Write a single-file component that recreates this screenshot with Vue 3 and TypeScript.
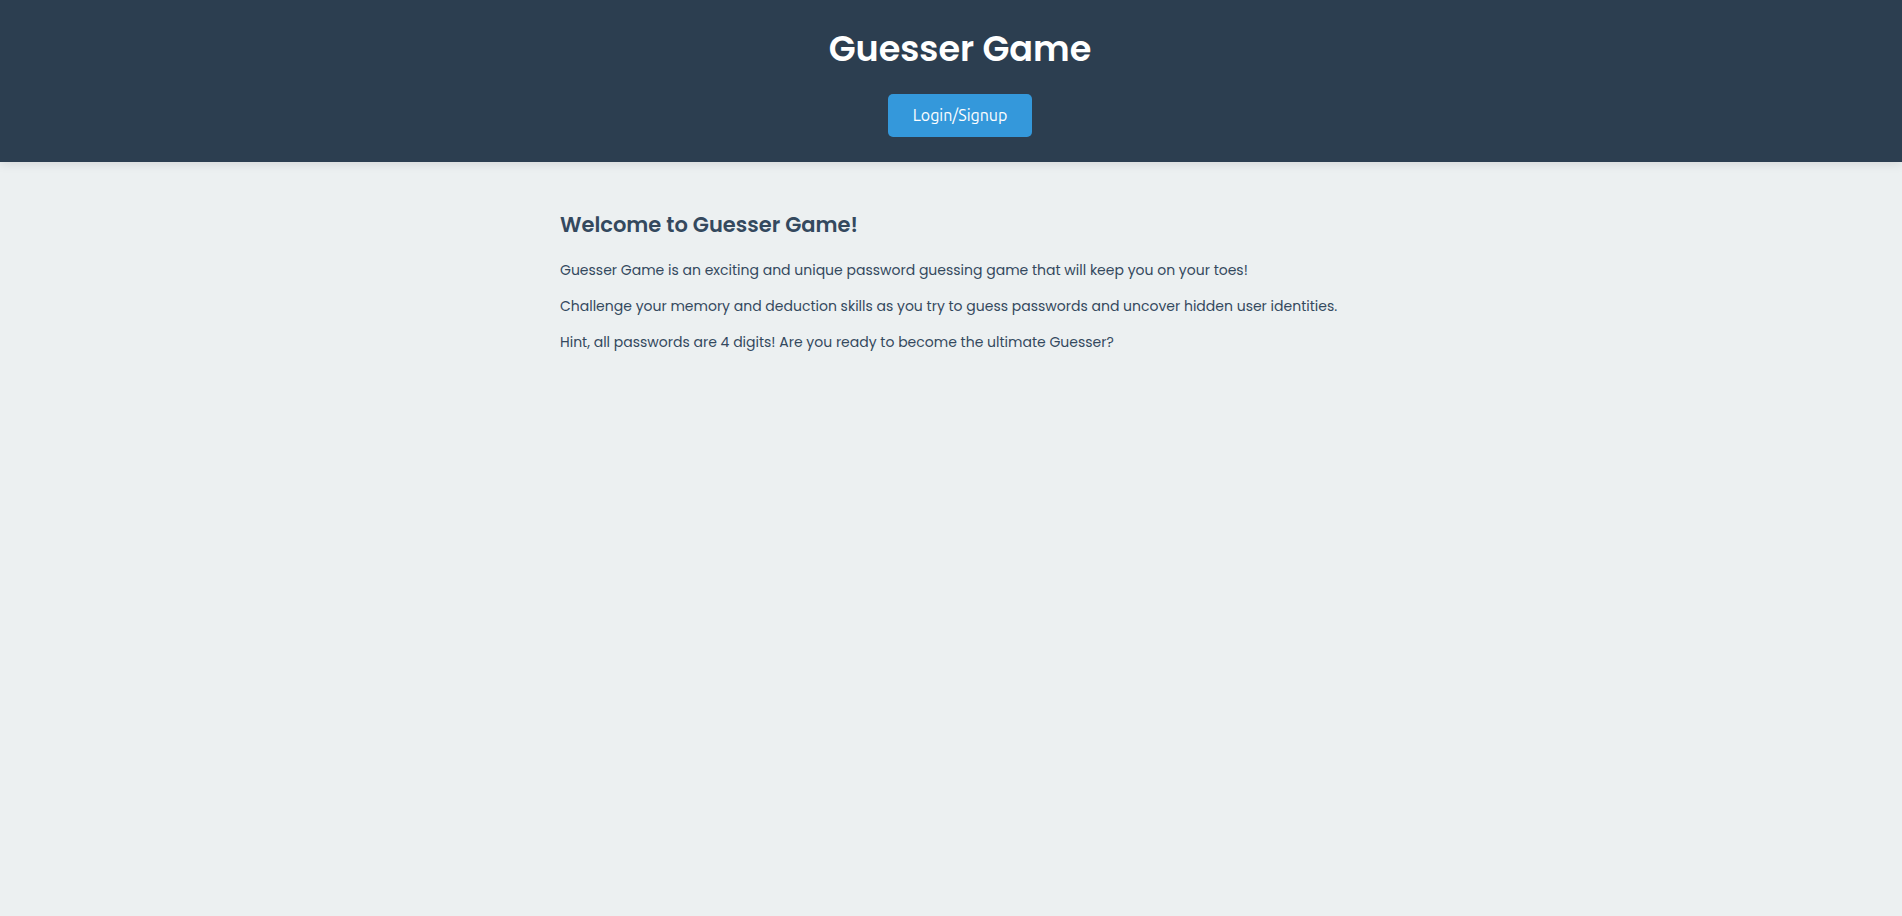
<script setup lang="ts">
const title: string = 'Guesser Game'
const paragraphs: string[] = [
  'Guesser Game is an exciting and unique password guessing game that will keep you on your toes!',
  'Challenge your memory and deduction skills as you try to guess passwords and uncover hidden user identities.',
  'Hint, all passwords are 4 digits! Are you ready to become the ultimate Guesser?',
]
</script>

<template>
  <div class="page">
    <header class="header">
      <h1 class="title">{{ title }}</h1>
      <button type="button" class="login">Login/Signup</button>
    </header>
    <main class="content">
      <h2 class="welcome">Welcome to {{ title }}!</h2>
      <p v-for="text in paragraphs" :key="text" class="text">{{ text }}</p>
    </main>
  </div>
</template>

<style>
body {
  margin: 0;
  background: #ecf0f1;
}
</style>

<style scoped>
.page {
  min-height: 100vh;
  background: #ecf0f1;
  color: #34495e;
  font-family: Poppins, Inter, sans-serif;
}

.header {
  display: flex;
  flex-direction: column;
  align-items: center;
  gap: 18px;
  padding: 22px 0 25px 18px;
  background: #2c3e50;
  box-shadow: 0 2px 10px rgba(0, 0, 0, 0.1);
  color: #fff;
}

.title {
  margin: 0;
  font-size: 35px;
  font-weight: 600;
  line-height: 54px;
}

.login {
  padding: 10px 25px;
  border: 0;
  border-radius: 5px;
  background: #3498db;
  color: #fff;
  font-family: Ubuntu, "Noto Sans", sans-serif;
  font-size: 16px;
  line-height: 23px;
  cursor: pointer;
}

.content {
  max-width: 782px;
  margin: 0 auto;
  padding: 45px 20px;
}

.welcome {
  margin: 0 0 16px;
  font-size: 21px;
  font-weight: 600;
  line-height: 36px;
}

.text {
  margin: 0 0 14px;
  font-size: 14px;
  line-height: 22px;
}
</style>
